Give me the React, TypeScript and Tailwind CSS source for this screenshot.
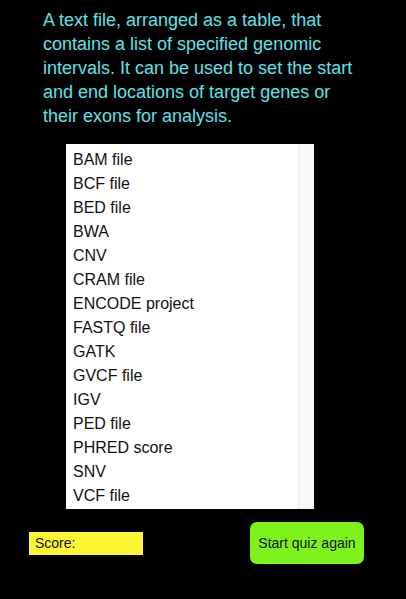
import React from 'react';

const terms = [
  'BAM file',
  'BCF file',
  'BED file',
  'BWA',
  'CNV',
  'CRAM file',
  'ENCODE project',
  'FASTQ file',
  'GATK',
  'GVCF file',
  'IGV',
  'PED file',
  'PHRED score',
  'SNV',
  'VCF file',
];

export default function App() {
  return (
    <div
      className="w-[406px] h-[599px] bg-black overflow-hidden"
      style={{ fontFamily: '"Liberation Sans", Arial, sans-serif' }}
    >
      {/* Definition */}
      <p className="ml-[43px] w-[318px] pt-[8px] text-[18px] leading-[24px] text-[#5de3e8]">
        A text file, arranged as a table, that contains a list of specified genomic intervals. It can be used to set the start and end locations of target genes or their exons for analysis.
      </p>

      {/* Term list */}
      <div className="ml-[66px] mt-[16px] w-[248px] h-[365px] bg-white flex">
        <ul className="flex-1 pt-[4px] pl-[7px] text-[16px] leading-[24px] text-[#111]">
          {terms.map((t) => (
            <li key={t}>{t}</li>
          ))}
        </ul>
        <div className="w-[16px] h-full bg-[#f8f8f8] border-l border-[#ececec]" />
      </div>

      {/* Footer */}
      <div className="flex items-center justify-between pl-[29px] pr-[42px] mt-[13px]">
        <div className="w-[114px] h-[23px] bg-[#fdf733] flex items-center pl-[6px] text-[14px] text-[#111]">
          Score:
        </div>
        <button className="w-[114px] h-[42px] bg-[#7ff21c] rounded-[7px] text-[14px] text-[#111]">
          Start quiz again
        </button>
      </div>
    </div>
  );
}
